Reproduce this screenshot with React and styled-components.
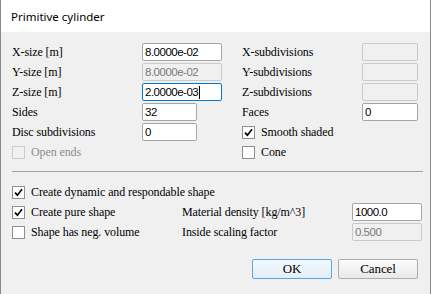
import React from 'react';
import styled, { createGlobalStyle } from 'styled-components';

const COLORS = {
  face: '#f0f0f0',
  frame: '#8a8a8a',
  text: '#000000',
  textDisabled: '#8d8d8d',
  field: '#ffffff',
  fieldBorder: '#a6a6a6',
  fieldDisabledBorder: '#cacaca',
  focus: '#0078d7',
  separator: '#a0a0a0',
};

const GlobalStyle = createGlobalStyle`
  html, body {
    margin: 0;
    padding: 0;
    background: #ffffff;
  }
`;

const Dialog = styled.div`
  width: 431px;
  height: 294px;
  box-sizing: border-box;
  border-left: 1px solid ${COLORS.frame};
  border-right: 1px solid ${COLORS.frame};
  background: ${COLORS.face};
  display: flex;
  flex-direction: column;
  font-family: 'Liberation Serif', 'Times New Roman', serif;
  font-size: 12px;
  letter-spacing: -0.1px;
  color: ${COLORS.text};
`;

const TitleBar = styled.div`
  height: 32px;
  background: #ffffff;
  display: flex;
  align-items: center;
  padding-left: 10px;
  font-family: 'Noto Sans', 'Open Sans', sans-serif;
  font-size: 11.5px;
  letter-spacing: 0;
  color: #000;
`;

const Body = styled.div`
  padding: 10px 11px 0 11px;
  display: flex;
  flex-direction: column;
`;

const TopGrid = styled.div`
  display: grid;
  grid-template-columns: 130px 80px 20px 120px 56px;
  grid-auto-rows: 20px;
  align-items: center;
`;

const BottomGrid = styled.div`
  display: grid;
  grid-template-columns: 170px 170px 70px;
  grid-auto-rows: 20px;
  align-items: center;
  margin-top: 10px;
`;

const Label = styled.span`
  white-space: nowrap;
  color: ${(p) => (p.$disabled ? COLORS.textDisabled : COLORS.text)};
  grid-column: ${(p) => p.$col || 'auto'};
`;

const Field = styled.div`
  box-sizing: border-box;
  width: ${(p) => p.$width || 80}px;
  height: ${(p) => p.$height || 18}px;
  grid-column: ${(p) => p.$col || 'auto'};
  border: 1px solid
    ${(p) => (p.$focused ? COLORS.focus : p.$disabled ? COLORS.fieldDisabledBorder : COLORS.fieldBorder)};
  border-radius: 2px;
  background: ${(p) => (p.$disabled ? COLORS.face : COLORS.field)};
  color: ${(p) => (p.$disabled ? '#7a7a7a' : '#000')};
  font-family: 'Liberation Sans', Arial, sans-serif;
  font-size: 11.5px;
  letter-spacing: -0.5px;
  line-height: 16px;
  padding-left: 2px;
  display: flex;
  align-items: center;
  white-space: nowrap;
`;

const Caret = styled.span`
  display: inline-block;
  width: 1px;
  height: 13px;
  margin-left: 1px;
  background: #000;
`;

const CheckRow = styled.label`
  display: flex;
  align-items: center;
  gap: 6px;
  grid-column: ${(p) => p.$col || 'auto'};
  color: ${(p) => (p.$disabled ? COLORS.textDisabled : COLORS.text)};
  white-space: nowrap;
`;

const Box = styled.span`
  box-sizing: border-box;
  width: 13px;
  height: 13px;
  border: 1px solid ${(p) => (p.$disabled ? '#cccccc' : '#8f8f8f')};
  background: ${(p) => (p.$disabled ? COLORS.face : '#ffffff')};
  display: flex;
  align-items: center;
  justify-content: center;
  flex: none;
`;

const Separator = styled.div`
  height: 1px;
  width: 411px;
  background: ${COLORS.separator};
  margin-top: 9px;
`;

const ButtonRow = styled.div`
  display: flex;
  justify-content: flex-end;
  gap: 6px;
  margin-top: 17px;
  padding-right: 1px;
`;

const Button = styled.div`
  box-sizing: border-box;
  width: ${(p) => p.$width || 80}px;
  height: 20px;
  border: 1px solid ${(p) => (p.$default ? '#5aa5e6' : '#adadad')};
  border-radius: 2px;
  background: ${(p) =>
    p.$default
      ? 'linear-gradient(#f4f9fd, #e3eef8)'
      : 'linear-gradient(#fbfbfb, #e9e9e9)'};
  display: flex;
  align-items: center;
  justify-content: center;
  font-size: 13px;
`;

function Check({ checked, disabled }) {
  return (
    <Box $disabled={disabled}>
      {checked && (
        <svg width="9" height="9" viewBox="0 0 9 9">
          <path d="M1 4.6 L3.4 7.2 L8 1.2" fill="none" stroke="#000" strokeWidth="1.7" />
        </svg>
      )}
    </Box>
  );
}

function CheckItem({ label, checked, disabled, col }) {
  return (
    <CheckRow $col={col} $disabled={disabled}>
      <Check checked={checked} disabled={disabled} />
      {label}
    </CheckRow>
  );
}

export default function App() {
  return (
    <>
      <GlobalStyle />
      <Dialog>
        <TitleBar>Primitive cylinder</TitleBar>
        <Body>
          <TopGrid>
            <Label>X-size [m]</Label>
            <Field>8.0000e-02</Field>
            <Label $col="4">X-subdivisions</Label>
            <Field $width={56} $disabled />

            <Label>Y-size [m]</Label>
            <Field $disabled>8.0000e-02</Field>
            <Label $col="4">Y-subdivisions</Label>
            <Field $width={56} $disabled />

            <Label>Z-size [m]</Label>
            <Field $focused>
              2.0000e-03
              <Caret />
            </Field>
            <Label $col="4">Z-subdivisions</Label>
            <Field $width={56} $disabled />

            <Label>Sides</Label>
            <Field $width={55}>32</Field>
            <Label $col="4">Faces</Label>
            <Field $width={56}>0</Field>

            <Label>Disc subdivisions</Label>
            <Field $width={55}>0</Field>
            <CheckItem col="4 / span 2" label="Smooth shaded" checked />

            <CheckItem col="1 / span 2" label="Open ends" disabled />
            <CheckItem col="4 / span 2" label="Cone" />
          </TopGrid>

          <Separator />

          <BottomGrid>
            <CheckItem col="1 / span 3" label="Create dynamic and respondable shape" checked />

            <CheckItem label="Create pure shape" checked />
            <Label>Material density [kg/m^3]</Label>
            <Field $width={70}>1000.0</Field>

            <CheckItem label="Shape has neg. volume" />
            <Label>Inside scaling factor</Label>
            <Field $width={70} $disabled>0.500</Field>
          </BottomGrid>

          <ButtonRow>
            <Button $default>OK</Button>
            <Button $width={80}>Cancel</Button>
          </ButtonRow>
        </Body>
      </Dialog>
    </>
  );
}
